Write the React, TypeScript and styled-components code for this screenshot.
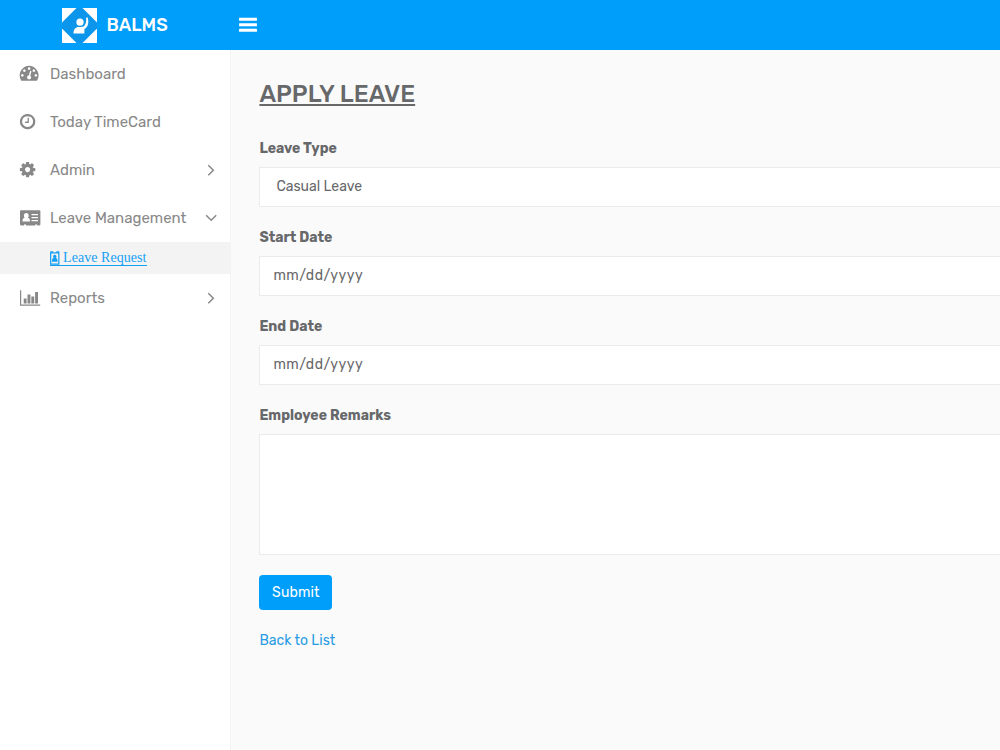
import React from "react";
import styled, { createGlobalStyle } from "styled-components";

const GlobalStyle = createGlobalStyle`
  * { box-sizing: border-box; }
  html, body, #root { height: 100%; }
  body {
    margin: 0;
    overflow: hidden;
    background: #fafafa;
    font-family: Rubik, Roboto, "Liberation Sans", sans-serif;
    color: #67686a;
  }
`;

const Page = styled.div`
  display: flex;
  flex-direction: column;
  height: 750px;
  overflow: hidden;
`;

const TopBar = styled.header`
  display: flex;
  align-items: center;
  flex: 0 0 50px;
  background: #009efb;
  color: #fff;
`;

const Brand = styled.div`
  display: flex;
  align-items: center;
  width: 239px;
  padding-left: 62px;
`;

const BrandName = styled.span`
  margin-left: 8.5px;
  font-size: 18px;
  line-height: 24px;
  font-weight: 500;
`;

const MenuButton = styled.button`
  display: flex;
  padding: 0;
  border: 0;
  background: none;
  color: inherit;
`;

const Body = styled.div`
  display: flex;
  flex: 1;
  min-height: 0;
`;

const Sidebar = styled.nav`
  flex: 0 0 231px;
  background: #fff;
  border-right: 1px solid #f3f3f3;
`;

const NavItem = styled.a`
  display: flex;
  align-items: center;
  height: 48px;
  padding: 0 13px 0 19px;
  color: #888;
`;

const IconSlot = styled.span`
  display: flex;
  flex: 0 0 31px;
`;

const NavLabel = styled.span`
  flex: 1;
  white-space: nowrap;
  font-size: 15px;
  line-height: 20px;
`;

const SubItem = styled.a`
  display: flex;
  align-items: center;
  height: 32px;
  padding-left: 50px;
  background: #f3f3f3;
  color: #159ff3;
  font: 14px/17px "Liberation Serif", serif;
`;

const SubLink = styled.span`
  display: flex;
  align-items: center;
  height: 15px;
  border-bottom: 1px solid #159ff3;
  white-space: pre;
  letter-spacing: 0.05px;
`;

const Main = styled.main`
  flex: 1;
  min-width: 0;
  padding: 29px 0 0 28.4px;
`;

const Title = styled.h3`
  width: max-content;
  margin: 0 0 30px;
  font-size: 24px;
  line-height: 31px;
  font-weight: 500;
  text-decoration: underline;
  text-decoration-thickness: 2px;
  text-underline-offset: 2px;
`;

const Form = styled.form`
  display: flex;
  flex-direction: column;
  align-items: flex-start;
`;

const Field = styled.div<{ $gap?: number }>`
  width: 790px;
  margin-bottom: ${(p) => p.$gap ?? 22}px;
`;

const Label = styled.label`
  display: block;
  height: 18px;
  margin-bottom: 9px;
  font-size: 14px;
  line-height: 18px;
  font-weight: 700;
`;

const Control = styled.div<{ $height?: number; $inset?: number; $track?: number }>`
  height: ${(p) => p.$height ?? 40}px;
  padding: 0 ${(p) => p.$inset ?? 13}px;
  border: 1px solid #ebebeb;
  background: #fff;
  font-size: 14px;
  line-height: 37px;
  letter-spacing: ${(p) => p.$track ?? 0}px;
`;

const Submit = styled.button`
  width: 73px;
  height: 35px;
  padding: 0;
  border: 0;
  border-radius: 4px;
  background: #009efb;
  color: #fff;
  font: 400 14px/35px Rubik, Roboto, sans-serif;
  letter-spacing: 0.15px;
`;

const BackLink = styled.a`
  margin-top: 22px;
  color: #2b9ce4;
  font-size: 14px;
  line-height: 18px;
`;

const Logo = () => (
  <svg width="36" height="36" viewBox="0 0 36 36">
    <rect width="35" height="35" y="1" fill="#fff" />
    <path d="M14.500 1h6L35 15.500v6L20.500 36h-6L0 21.500v-6z" fill="#0b96ec" />
    <circle cx="18" cy="15.200" r="3.600" fill="#fff" />
    <path d="M11.500 26.500c0-4.300 2-6.500 5.500-6.500h2c3.800 0 5.500-3.300 5.200-9.500h1.500c1.500 5.500.3 9.500-3.300 11.500v4.500z" fill="#fff" />
  </svg>
);

const Bars = () => (
  <svg width="18" height="16" viewBox="0 0 18 16" fill="currentColor">
    <rect y="0.800" width="18" height="3" rx=".6" />
    <rect y="6.300" width="18" height="3" rx=".6" />
    <rect y="11.800" width="18" height="3" rx=".6" />
  </svg>
);

const Glyph = ({ d, size = 18, box = "0 0 1792 1792" }: { d: string; size?: number; box?: string }) => (
  <svg width={size} height={size} viewBox={box} fill="currentColor">
    <path d={d} />
  </svg>
);

const gauge =
  "M384 1152q0-53-37.5-90.5t-90.5-37.5-90.5 37.5-37.5 90.5 37.5 90.5 90.5 37.5 90.5-37.5 37.5-90.5zm192-448q0-53-37.5-90.5t-90.5-37.5-90.5 37.5-37.5 90.5 37.5 90.5 90.5 37.5 90.5-37.5 37.5-90.5zm428 481l101-382q6-26-7.5-48.5t-38.5-29.5-48 6.5-30 39.5l-101 382q-60 5-107 43.5t-63 98.5q-20 77 20 146t117 89 146-20 89-117q16-60-6-117t-72-91zm660-33q0-53-37.5-90.5t-90.5-37.5-90.5 37.5-37.5 90.5 37.5 90.5 90.5 37.5 90.5-37.5 37.5-90.5zm-640-640q0-53-37.5-90.5t-90.5-37.5-90.5 37.5-37.5 90.5 37.5 90.5 90.5 37.5 90.5-37.5 37.5-90.5zm448 192q0-53-37.5-90.5t-90.5-37.5-90.5 37.5-37.5 90.5 37.5 90.5 90.5 37.5 90.5-37.5 37.5-90.5zm320 448q0 261-141 483-19 29-54 29h-1402q-35 0-54-29-141-221-141-483 0-182 71-348t191-286 286-191 348-71 348 71 286 191 191 286 71 348z";
const clock =
  "M1024 544v448q0 14-9 23t-23 9h-320q-14 0-23-9t-9-23v-64q0-14 9-23t23-9h224v-352q0-14 9-23t23-9h64q14 0 23 9t9 23zm416 352q0-148-73-273t-198-198-273-73-273 73-198 198-73 273 73 273 198 198 273 73 273-73 198-198 73-273zm224 0q0 209-103 385.5t-279.5 279.5-385.5 103-385.5-103-279.5-279.5-103-385.5 103-385.5 279.5-279.5 385.5-103 385.5 103 279.5 279.5 103 385.5z";
const cog =
  "M1152 896q0-106-75-181t-181-75-181 75-75 181 75 181 181 75 181-75 75-181zm512-109v222q0 12-8 23t-20 13l-185 28q-19 54-39 91 35 50 107 138 10 12 10 25t-9 23q-27 37-99 108t-94 71q-12 0-26-9l-138-108q-44 23-91 38-16 136-29 186-7 28-36 28h-222q-14 0-24.5-8.5t-11.5-21.5l-28-184q-49-16-90-37l-141 107q-10 9-25 9-14 0-25-11-126-114-165-168-7-10-7-23 0-12 8-23 15-21 51-66.5t54-70.5q-27-50-41-99l-183-27q-13-2-21-12.5t-8-23.5v-222q0-12 8-23t19-13l186-28q14-46 39-92-40-57-107-138-10-12-10-24 0-10 9-23 26-36 98.5-107.5t94.5-71.5q13 0 26 10l138 107q44-23 91-38 16-136 29-186 7-28 36-28h222q14 0 24.5 8.5t11.5 21.5l28 184q49 16 90 37l142-107q9-9 24-9 13 0 25 10 129 119 165 170 7 8 7 22 0 12-8 23-15 21-51 66.5t-54 70.5q26 50 41 98l183 28q13 2 21 12.5t8 23.5z";

const Card = () => (
  <svg width="22" height="16" viewBox="0 0 22 16">
    <path
      fill="currentColor"
      fillRule="evenodd"
      d="M2.200.3h18c.7 0 1.200.5 1.200 1.200v12.800c0 .7-.5 1.200-1.200 1.200h-2v-1h-2v1H7v-1H5v1H2.200c-.7 0-1.200-.5-1.200-1.200V1.500C1 .8 1.500.3 2.200.3zM3.500 11.500h7.500c0-2.500-.8-3.500-2.200-3.700.6-.6.9-1.200.9-2.100 0-1.700-.9-2.700-2.400-2.700s-2.400 1-2.400 2.700c0 .9.300 1.500.9 2.100-1.500.2-2.300 1.200-2.300 3.700zM12.500 4v1.200h6.500V4zm0 3v1.200h6.500V7zm0 3v1.200h6.500V10z"
    />
  </svg>
);

const Chart = () => (
  <svg width="22" height="17" viewBox="0 0 22 17" fill="currentColor">
    <path d="M1 .3h1.200v14.200h19v1.200H1zM4.700 8.500h2.900v5H4.700zM8.500 4.500h2.900v9H8.500zM12.300 6.500h2.900v7h-2.900zM16.100 2h2.900v11.500h-2.900z" />
  </svg>
);

const Badge = () => (
  <svg width="9.500" height="14" viewBox="0 0 10 14" preserveAspectRatio="none">
    <path d="M.7 1.800h8.600v11.400H.7z" fill="none" stroke="currentColor" strokeWidth="1.300" />
    <path d="M.300.300h3v1.400h-3zM6.700.300h3v1.400h-3z" fill="currentColor" />
    <circle cx="5" cy="5.600" r="1.800" fill="currentColor" />
    <path d="M2 10.800c0-2.600.7-3.900 1.800-3.900h2.400c1.100 0 1.800 1.300 1.800 3.900z" fill="currentColor" />
  </svg>
);

const Chevron = ({ open }: { open?: boolean }) => (
  <svg width="12" height="12" viewBox="0 0 12 12" fill="none" stroke="currentColor" strokeWidth="1.500">
    <path d={open ? "M1.200 3.200 6.200 8.200 11.200 3.200" : "M3.300 1.200 8.300 6.200 3.300 11.200"} />
  </svg>
);

export default function App() {
  return (
    <Page>
      <GlobalStyle />
      <TopBar>
        <Brand>
          <Logo />
          <BrandName>BALMS</BrandName>
        </Brand>
        <MenuButton aria-label="Toggle menu"><Bars /></MenuButton>
      </TopBar>
      <Body>
        <Sidebar>
          <NavItem>
            <IconSlot><Glyph d={gauge} size={20} box="-60 80 1892 1892" /></IconSlot>
            <NavLabel>Dashboard</NavLabel>
          </NavItem>
          <NavItem>
            <IconSlot><Glyph d={clock} box="40 40 1792 1792" /></IconSlot>
            <NavLabel>Today TimeCard</NavLabel>
          </NavItem>
          <NavItem>
            <IconSlot><Glyph d={cog} box="40 40 1792 1792" /></IconSlot>
            <NavLabel>Admin</NavLabel>
            <Chevron />
          </NavItem>
          <NavItem>
            <IconSlot><Card /></IconSlot>
            <NavLabel>Leave Management</NavLabel>
            <Chevron open />
          </NavItem>
          <SubItem>
            <SubLink><Badge /> Leave Request</SubLink>
          </SubItem>
          <NavItem>
            <IconSlot><Chart /></IconSlot>
            <NavLabel>Reports</NavLabel>
            <Chevron />
          </NavItem>
        </Sidebar>
        <Main>
          <Title>APPLY LEAVE</Title>
          <Form>
            <Field>
              <Label>Leave Type</Label>
              <Control $inset={16}>Casual Leave</Control>
            </Field>
            <Field>
              <Label>Start Date</Label>
              <Control $track={0.5}>mm/dd/yyyy</Control>
            </Field>
            <Field>
              <Label>End Date</Label>
              <Control $track={0.5}>mm/dd/yyyy</Control>
            </Field>
            <Field $gap={20}>
              <Label>Employee Remarks</Label>
              <Control $height={121} />
            </Field>
            <Submit type="button">Submit</Submit>
            <BackLink>Back to List</BackLink>
          </Form>
        </Main>
      </Body>
    </Page>
  );
}
